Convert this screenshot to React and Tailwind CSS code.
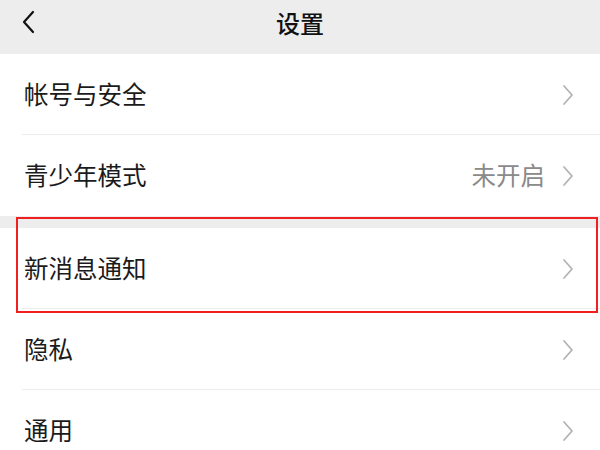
import React from "react";

const Chevron = () => (
  <svg width="12" height="22" viewBox="0 0 12 22" className="shrink-0">
    <path d="M2 2 L10 11 L2 20" fill="none" stroke="#b3b3b3" strokeWidth="1.8" strokeLinecap="round" strokeLinejoin="round" />
  </svg>
);

const Row = ({ label, value, divider }) => (
  <div className="relative flex h-[81px] items-center bg-white pl-[24px] pr-[26px]">
    <span className="flex-1 text-[24.5px] text-[#1b1b1b]">{label}</span>
    {value && <span className="mr-[17px] text-[24.5px] text-[#8a8a8a]">{value}</span>}
    <Chevron />
    {divider && <div className="absolute bottom-0 left-[22px] right-0 h-px bg-[#ececec]" />}
  </div>
);

export default function App() {
  return (
    <div
      className="relative h-[450px] w-[600px] overflow-hidden bg-white"
      style={{ fontFamily: '"Noto Sans CJK SC", "Noto Sans", sans-serif' }}
    >
      <div className="relative flex h-[54px] items-center justify-center bg-[#ededed] pb-[9px]">
        <svg width="13" height="24" viewBox="0 0 13 24" className="absolute left-[22px] top-[10px]">
          <path d="M11 2 L2 12 L11 22" fill="none" stroke="#111" strokeWidth="2.2" strokeLinecap="round" strokeLinejoin="round" />
        </svg>
        <span className="text-[24px] font-medium text-[#111]">设置</span>
      </div>
      <Row label="帐号与安全" divider />
      <Row label="青少年模式" value="未开启" />
      <div className="h-[12px] bg-[#ededed]" />
      <Row label="新消息通知" divider />
      <Row label="隐私" divider />
      <Row label="通用" />
      <div className="pointer-events-none absolute left-[16px] top-[217px] h-[96px] w-[582px] border-2 border-[#f02020]" />
    </div>
  );
}
